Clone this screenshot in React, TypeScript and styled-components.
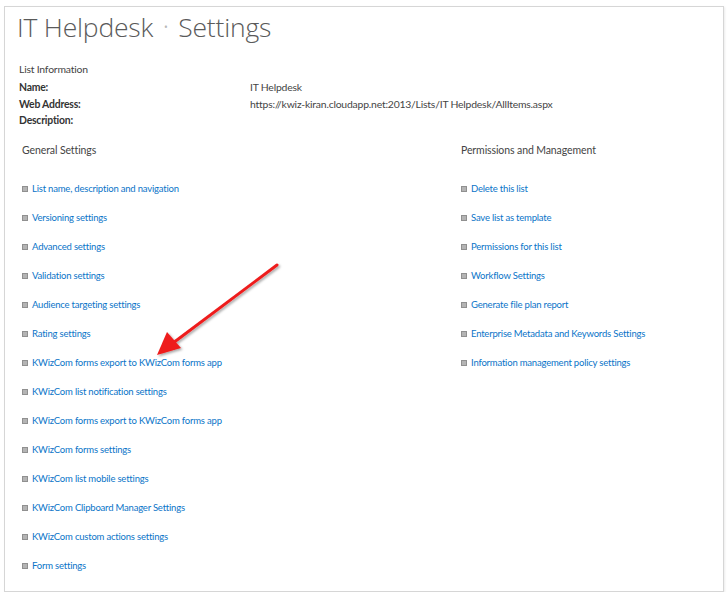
import styled, { createGlobalStyle } from 'styled-components';

const GlobalStyle = createGlobalStyle`
	html, body {
		margin: 0;
		padding: 0;
		background: #ffffff;
	}
	body {
		font-family: Lato, 'Open Sans', sans-serif;
		color: #444444;
	}
`;

const Frame = styled.div`
	position: relative;
	box-sizing: border-box;
	width: 720px;
	height: 586px;
	margin: 6px 0 0 4px;
	border: 1px solid #d6d6d6;
	box-shadow: 1px 1px 2px rgba(0, 0, 0, 0.08);
	padding: 0 14px;
`;

const Title = styled.h1`
	margin: 2px 0 0 -2px;
	font-family: 'Open Sans', sans-serif;
	font-size: 26.5px;
	font-weight: 300;
	line-height: 36px;
	color: #5a5a5a;
	letter-spacing: -0.2px;
`;

const Crumb = styled.span`
	display: inline-block;
	margin: 0 10px;
	font-size: 14px;
	vertical-align: 5px;
	color: #b8b8b8;
`;

const InfoBlock = styled.div`
	margin-top: 16px;
	font-size: 10.4px;
	letter-spacing: -0.2px;
`;

const InfoCaption = styled.div`
	line-height: 16px;
	margin-bottom: 2px;
	color: #444444;
`;

const InfoRow = styled.div`
	display: grid;
	grid-template-columns: 231px 1fr;
	line-height: 16.5px;
	color: #444444;
`;

const InfoLabel = styled.span`
	font-weight: 700;
	color: #333333;
`;

const Columns = styled.div`
	display: grid;
	grid-template-columns: 439px 1fr;
	margin-top: 13px;
	padding-left: 3px;
`;

const Section = styled.section``;

const SectionTitle = styled.h2`
	margin: 0 0 16px 0;
	font-size: 10.5px;
	font-weight: 400;
	line-height: 16px;
	letter-spacing: -0.1px;
	color: #444444;
`;

const LinkList = styled.ul`
	list-style: none;
	margin: 0;
	padding: 0;
`;

const LinkItem = styled.li`
	display: flex;
	align-items: center;
	height: 29px;
	font-size: 9.5px;
	letter-spacing: -0.2px;
`;

const Bullet = styled.span`
	width: 4px;
	height: 4px;
	margin-right: 4px;
	margin-top: 1px;
	background: #b4b4b4;
	border: 0.5px solid #909090;
`;

const SettingLink = styled.a`
	color: #0a74c8;
	text-decoration: none;
	cursor: pointer;
`;

const Pointer = styled.svg`
	position: absolute;
	left: 144px;
	top: 246px;
	overflow: visible;
`;

const generalSettings = [
	'List name, description and navigation',
	'Versioning settings',
	'Advanced settings',
	'Validation settings',
	'Audience targeting settings',
	'Rating settings',
	'KWizCom forms export to KWizCom forms app',
	'KWizCom list notification settings',
	'KWizCom forms export to KWizCom forms app',
	'KWizCom forms settings',
	'KWizCom list mobile settings',
	'KWizCom Clipboard Manager Settings',
	'KWizCom custom actions settings',
	'Form settings',
];

const permissions = [
	'Delete this list',
	'Save list as template',
	'Permissions for this list',
	'Workflow Settings',
	'Generate file plan report',
	'Enterprise Metadata and Keywords Settings',
	'Information management policy settings',
];

const SettingsColumn = ({ title, items }: { title: string; items: string[] }) => (
	<Section>
		<SectionTitle>{title}</SectionTitle>
		<LinkList>
			{items.map((item, i) => (
				<LinkItem key={i}>
					<Bullet />
					<SettingLink>{item}</SettingLink>
				</LinkItem>
			))}
		</LinkList>
	</Section>
);

const App = () => {
	return (
		<>
			<GlobalStyle />
			<Frame>
				<Title>
					IT Helpdesk<Crumb>•</Crumb>Settings
				</Title>
				<InfoBlock>
					<InfoCaption>List Information</InfoCaption>
					<InfoRow>
						<InfoLabel>Name:</InfoLabel>
						<span>IT Helpdesk</span>
					</InfoRow>
					<InfoRow>
						<InfoLabel>Web Address:</InfoLabel>
						<span>https://kwiz-kiran.cloudapp.net:2013/Lists/IT Helpdesk/AllItems.aspx</span>
					</InfoRow>
					<InfoRow>
						<InfoLabel>Description:</InfoLabel>
						<span />
					</InfoRow>
				</InfoBlock>
				<Columns>
					<SettingsColumn title="General Settings" items={generalSettings} />
					<SettingsColumn title="Permissions and Management" items={permissions} />
				</Columns>
				{/* red callout arrow */}
				<Pointer width="130" height="104" viewBox="0 0 130 104">
					<defs>
						<filter id="arrowShadow" x="-20%" y="-20%" width="140%" height="140%">
							<feDropShadow dx="1.5" dy="1.5" stdDeviation="1.2" floodColor="#000" floodOpacity="0.35" />
						</filter>
					</defs>
					<g filter="url(#arrowShadow)">
						<line x1="128" y1="12" x2="24" y2="90" stroke="#ee1c1c" strokeWidth="3" strokeLinecap="round" />
						<polygon points="8,102 18,79 32,95" fill="#ee1c1c" />
					</g>
				</Pointer>
			</Frame>
		</>
	);
};

export default App;
